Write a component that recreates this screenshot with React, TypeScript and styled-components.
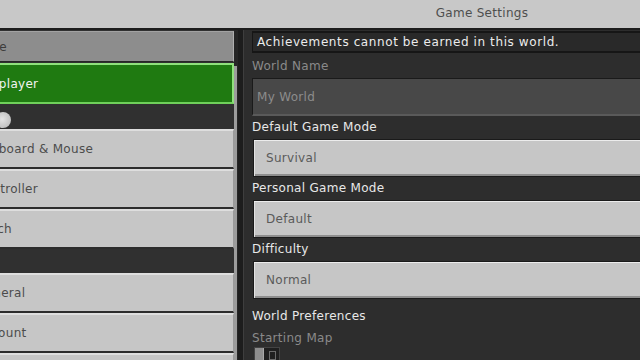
import * as React from 'react'
import styled, { createGlobalStyle } from 'styled-components'

// the reference is a crop of a wider screen: 40px of it sits off the left edge
const CUT = 40

const GlobalStyle = createGlobalStyle`
  html, body {
    margin: 0;
    padding: 0;
    width: 640px;
    height: 360px;
    overflow: hidden;
    background: #2e2e2e;
  }
  body {
    font-family: 'DejaVu Sans', 'Noto Sans', sans-serif;
    font-size: 12px;
  }
  * { box-sizing: border-box; }
`

const Screen = styled.div`
  width: 760px;
  height: 360px;
  margin-left: -${CUT}px;
  display: flex;
  flex-direction: column;
`

const Header = styled.header`
  height: 30px;
  flex: none;
  display: flex;
  background: #c8c8c8;
  border-bottom: 2px solid #1c1c1c;
`

const HeaderSpacer = styled.div`
  width: 284px;
  flex: none;
`

const Title = styled.h1`
  flex: 1;
  margin: 0;
  font-size: 12px;
  font-weight: normal;
  line-height: 27px;
  text-align: center;
  color: #4e4e4e;
  letter-spacing: 0.3px;
`

const Body = styled.div`
  flex: 1;
  display: flex;
  min-height: 0;
  background: #2e2e2e;
`

const LeftPanel = styled.nav`
  width: 274px;
  flex: none;
  display: flex;
  flex-direction: column;
  padding-top: 1px;
  background: #303030;
`

type Tone = 'muted' | 'active' | 'plain'

const NavButton = styled.div<{ $tone: Tone; $h?: number; $indent?: number }>`
  height: ${p => p.$h ?? 40}px;
  flex: none;
  display: flex;
  align-items: center;
  padding-left: ${p => p.$indent ?? 16}px;
  letter-spacing: 0.3px;
  background: ${p =>
    p.$tone === 'active' ? '#1f7a11' : p.$tone === 'muted' ? '#8d8d8d' : '#c6c6c6'};
  color: ${p => (p.$tone === 'plain' ? '#4c4c4c' : p.$tone === 'active' ? '#f2f2f2' : '#3c3c3c')};
  border-top: ${p =>
    p.$tone === 'active' ? '2px solid #8fe07c' : p.$tone === 'muted' ? '1px solid #a2a2a2' : '2px solid #dedede'};
  border-bottom: ${p =>
    p.$tone === 'active' ? '2px solid #6fd05a' : p.$tone === 'muted' ? '1px solid #262626' : '2px solid #2c2c2c'};
  border-right: ${p =>
    p.$tone === 'active' ? '2px solid #8fe07c' : p.$tone === 'muted' ? '1px solid #b0b0b0' : '1px solid #9a9a9a'};
`

const SectionRow = styled.div<{ $h: number }>`
  height: ${p => p.$h}px;
  flex: none;
  display: flex;
  align-items: flex-end;
  padding-left: 35px;
  padding-bottom: 1px;
`

const Knob = styled.span`
  width: 16px;
  height: 16px;
  border-radius: 50%;
  background: radial-gradient(circle at 45% 45%, #e4e4e4 0%, #c2c2c2 70%, #9a9a9a 100%);
`

const ScrollTrack = styled.div`
  width: 4px;
  flex: none;
  padding-top: 36px;
  background: #262626;
`

const ScrollThumb = styled.div`
  width: 3px;
  height: 100%;
  background: #9c9c9c;
`

const Divider = styled.div`
  width: 6px;
  flex: none;
  background: #1d1d1d;
  border-right: 1px solid #3e3e3e;
`

const RightPanel = styled.section`
  flex: 1;
  display: flex;
  flex-direction: column;
  padding: 1px 0 0 8px;
  background: #2d2d2d;
`

const Notice = styled.div`
  height: 22px;
  flex: none;
  margin-bottom: 3px;
  padding-left: 4px;
  display: flex;
  align-items: center;
  background: #292929;
  border-top: 2px solid #161616;
  border-bottom: 2px solid #161616;
  border-left: 1px solid #161616;
  color: #ececec;
  letter-spacing: 0.6px;
`

const Label = styled.div<{ $dim?: boolean; $gap?: number }>`
  height: 20px;
  flex: none;
  line-height: 20px;
  margin-top: ${p => p.$gap ?? 0}px;
  margin-bottom: 2px;
  color: ${p => (p.$dim ? '#8a8a8a' : '#e8e8e8')};
  letter-spacing: 0.3px;
`

const TextField = styled.div`
  height: 38px;
  flex: none;
  margin-bottom: 1px;
  display: flex;
  align-items: center;
  padding-left: 4px;
  background: #484848;
  border: 1px solid #1a1a1a;
  border-bottom: 2px solid #5a5a5a;
  color: #8c8c8c;
  letter-spacing: 0.3px;
`

const Dropdown = styled.div`
  height: 38px;
  flex: none;
  margin: 0 0 1px 1px;
  display: flex;
  align-items: center;
  padding-left: 12px;
  background: #c6c6c6;
  border: 1px solid #1a1a1a;
  box-shadow: inset 0 1px 0 #ececec, inset 1px 0 0 #e2e2e2, inset 0 -2px 0 #8e8e8e;
  color: #5a5a5a;
  letter-spacing: 0.3px;
`

const Toggle = styled.div`
  width: 26px;
  height: 15px;
  margin: -1px 0 0 2px;
  display: flex;
  background: #1f1f1f;
  border: 1px solid #444;
`

const ToggleKnob = styled.span`
  width: 9px;
  background: #8e8e8e;
  border-right: 1px solid #a8a8a8;
`

const OffMark = styled.span`
  width: 7px;
  height: 9px;
  margin: 3px 0 0 5px;
  border: 1px solid #6a6a6a;
`

const navTop: { label: string; tone: Tone; h: number; indent: number }[] = [
  { label: 'Game', tone: 'muted', h: 31, indent: 10 },
  { label: 'Multiplayer', tone: 'active', h: 41, indent: 8 },
]

const controls = ['Keyboard & Mouse', 'Controller', 'Touch']
const general = ['General', 'Account', 'Storage']

const selects = [
  { label: 'Default Game Mode', value: 'Survival' },
  { label: 'Personal Game Mode', value: 'Default' },
  { label: 'Difficulty', value: 'Normal' },
]

export default function App() {
  return (
    <>
      <GlobalStyle />
      <Screen>
        <Header>
          <HeaderSpacer />
          <Title>Game Settings</Title>
        </Header>
        <Body>
          <LeftPanel>
            {navTop.map((n, i) => (
              <NavButton
                key={n.label}
                $tone={n.tone}
                $h={n.h}
                $indent={n.indent}
                style={i === 1 ? { marginTop: 1 } : undefined}
              >
                {n.label}
              </NavButton>
            ))}
            <SectionRow $h={25}>
              <Knob />
            </SectionRow>
            {controls.map(c => (
              <NavButton key={c} $tone='plain'>
                {c}
              </NavButton>
            ))}
            <SectionRow $h={24} />
            {general.map(g => (
              <NavButton key={g} $tone='plain'>
                {g}
              </NavButton>
            ))}
          </LeftPanel>
          <ScrollTrack>
            <ScrollThumb />
          </ScrollTrack>
          <Divider />
          <RightPanel>
            <Notice>Achievements cannot be earned in this world.</Notice>
            <Label $dim>World Name</Label>
            <TextField>My World</TextField>
            {selects.map(s => (
              <React.Fragment key={s.label}>
                <Label>{s.label}</Label>
                <Dropdown>{s.value}</Dropdown>
              </React.Fragment>
            ))}
            <Label $gap={6}>World Preferences</Label>
            <Label $dim style={{ marginBottom: 0 }}>Starting Map</Label>
            <Toggle>
              <ToggleKnob />
              <OffMark />
            </Toggle>
          </RightPanel>
        </Body>
      </Screen>
    </>
  )
}
